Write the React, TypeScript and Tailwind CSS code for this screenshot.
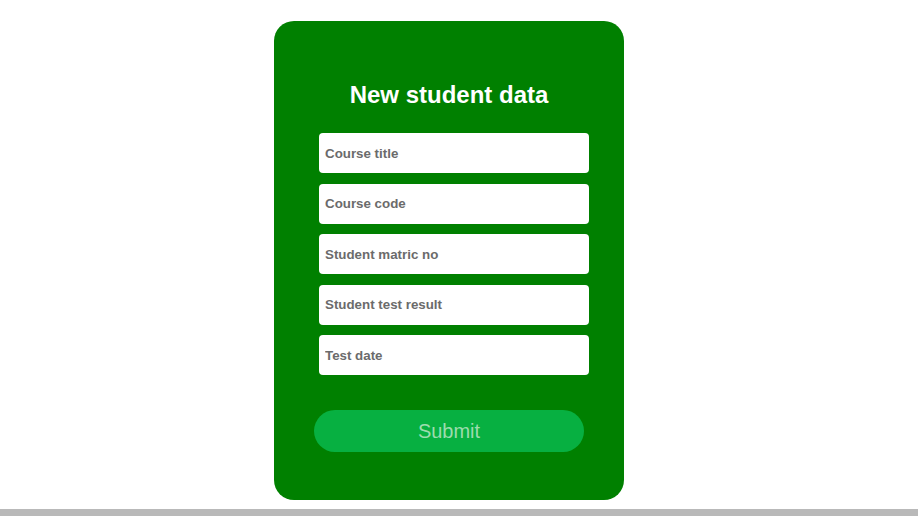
import { useState } from "react";

const fields = [
  "Course title",
  "Course code",
  "Student matric no",
  "Student test result",
  "Test date",
];

const App = () => {
  const [values, setValues] = useState<string[]>(fields.map(() => ""));

  return (
    <div className="flex h-[516px] w-full flex-col bg-white font-['Liberation_Sans',Arial,sans-serif]">
      <div className="flex flex-1 justify-center pt-[21px] pr-[20px]">
        {/* card */}
        <form
          className="flex h-[479px] w-[350px] flex-col items-center rounded-[20px] bg-[#008000] pt-[60px]"
          onSubmit={e => e.preventDefault()}
        >
          <h1 className="text-[24px] leading-[28px] font-bold text-white">
            New student data
          </h1>

          <div className="mt-[24px] ml-[10px] flex flex-col gap-[10.5px]">
            {fields.map((field, i) => (
              <input
                key={field}
                type="text"
                placeholder={field}
                value={values[i]}
                onChange={e => {
                  const next = [...values];
                  next[i] = e.target.value;
                  setValues(next);
                }}
                className="h-[40px] w-[270px] rounded-[4px] bg-white px-[6px] text-[13.33px] font-bold text-[#444] outline-none placeholder:text-[#6b6b6b]"
              />
            ))}
          </div>

          <button
            type="submit"
            className="mt-[35px] h-[42px] w-[270px] rounded-full bg-[#07b041] text-[20px] text-[#9cdcae]"
          >
            Submit
          </button>
        </form>
      </div>

      {/* bottom bar */}
      <div className="h-[7px] w-full bg-[#b9b9b9]" />
    </div>
  );
};

export default App;
